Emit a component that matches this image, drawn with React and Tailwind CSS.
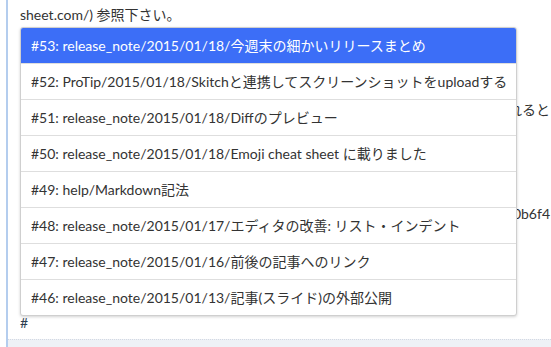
import React from 'react';

const items = [
  '#53: release_note/2015/01/18/今週末の細かいリリースまとめ',
  '#52: ProTip/2015/01/18/Skitchと連携してスクリーンショットをuploadする',
  '#51: release_note/2015/01/18/Diffのプレビュー',
  '#50: release_note/2015/01/18/Emoji cheat sheet に載りました',
  '#49: help/Markdown記法',
  '#48: release_note/2015/01/17/エディタの改善: リスト・インデント',
  '#47: release_note/2015/01/16/前後の記事へのリンク',
  '#46: release_note/2015/01/13/記事(スライド)の外部公開',
];

const font = { fontFamily: 'Lato, "Noto Sans CJK JP", sans-serif' };

const App = () => {
  return (
    <div
      className="relative w-[551px] h-[347px] overflow-hidden bg-white text-[14px] text-[#333]"
      style={font}
    >
      {/* Editor */}
      <div className="ml-[6px] h-full border-l-2 border-[#b4cdee] flex flex-col">
        <div className="flex-1 pl-[12px] overflow-hidden">
          <div className="-mt-[22px] leading-[24px] whitespace-nowrap">
            記事の中で使える絵文字は Emoji cheat sheet (http://www.emoji-cheat-
          </div>
          <div className="mt-[1px] leading-[24px] whitespace-nowrap">sheet.com/) 参照下さい。</div>
          <div className="h-[71px]"></div>
          <div className="w-[530px] leading-[24px] whitespace-nowrap text-right">れると</div>
          <div className="h-[80px]"></div>
          <div className="w-[530px] leading-[24px] whitespace-nowrap text-right">0b6f4</div>
          <div className="h-[85px]"></div>
          <div className="leading-[24px] text-[#2c3e50]">#</div>
        </div>
        <div className="h-[8px] shrink-0 bg-[#eef1f6] border-t border-dotted border-[#d3d9e3]"></div>
      </div>

      {/* Suggestion menu */}
      <ul className="absolute left-[20px] top-[27px] w-[497px] bg-white border border-[#cfcfcf] rounded-[3px] shadow-[0_1px_3px_rgba(0,0,0,0.18)] overflow-hidden">
        {items.map((item, i) => (
          <li
            key={item}
            className={
              'flex items-center pl-[10px] whitespace-nowrap ' +
              (i > 0 ? 'h-[36px] border-t border-[#dedede] ' : 'h-[35px] ') +
              (i === 0 ? 'bg-[#3c6ef7] text-white' : 'text-[#333]')
            }
          >
            {item}
          </li>
        ))}
      </ul>
    </div>
  );
};

export default App;
